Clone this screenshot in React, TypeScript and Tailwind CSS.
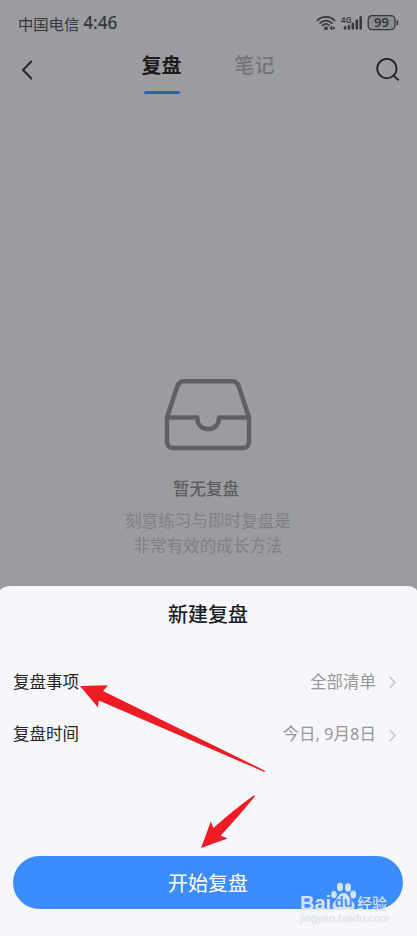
const CJK = "font-['Noto_Sans_CJK_SC',sans-serif]";

const ROWS: { label: string; value: string }[] = [
  { label: "复盘事项", value: "全部清单" },
  { label: "复盘时间", value: "今日, 9月8日" },
];

export default function App() {
  return (
    <div
      className={`relative flex h-[936px] w-[417px] flex-col overflow-hidden bg-[#9b9c9f] ${CJK}`}
    >
      <StatusBar />
      <Header />
      <EmptyState />
      <ReviewSheet />
      <Arrows />
      <Watermark />
    </div>
  );
}

function StatusBar() {
  return (
    <div className="flex h-[46px] shrink-0 items-center justify-between px-[18px] text-[#36373a]">
      <div className="flex items-center gap-1">
        <span className="text-[15.3px] leading-6">中国电信</span>
        <span className="font-['Noto_Sans',sans-serif] text-[17.2px] font-medium leading-6">
          4:46
        </span>
      </div>
      <svg width="84" height="18" viewBox="0 0 84 18" className="text-[#36373a]">
        {/* wifi */}
        <g fill="none" stroke="currentColor" strokeWidth="1.7" strokeLinecap="round">
          <path d="M2.5 6.3C7 1.7 15 1.7 19.5 6.3" />
          <path d="M5.1 9.1C8.5 5.7 13.5 5.7 16.9 9.1" />
          <path d="M7.6 11.5C9.7 9.7 12.3 9.7 14.1 11.3" />
        </g>
        <circle cx="11" cy="14.2" r="1.9" fill="currentColor" />
        <path d="M16.9 11.9v4.4l-2.6-2.2zM17.6 11.9v4.4l2.6-2.2z" fill="currentColor" />
        {/* mobile signal */}
        <text
          x="25.8"
          y="8.6"
          fontSize="9"
          fontWeight="600"
          fill="currentColor"
          className="font-['Noto_Sans',sans-serif]"
          textLength="10.8"
          lengthAdjust="spacingAndGlyphs"
        >
          4G
        </text>
        <g stroke="currentColor" strokeWidth="2.5" strokeLinecap="round">
          <path d="M30 13.3v1.2M33.9 11.9v2.6M37.8 9.8v4.7M41.8 6.7v7.8M45.7 3.2v11.3" />
        </g>
        {/* battery */}
        <rect
          x="53.2"
          y="1.6"
          width="26.8"
          height="14"
          rx="3.8"
          fill="#8b8c90"
          stroke="currentColor"
          strokeWidth="1.3"
        />
        <path d="M82.4 7v3.4" stroke="currentColor" strokeWidth="1.6" strokeLinecap="round" />
        <text
          x="66.5"
          y="13.1"
          fontSize="13"
          fontWeight="600"
          textAnchor="middle"
          fill="currentColor"
          className="font-['Noto_Sans',sans-serif]"
        >
          99
        </text>
      </svg>
    </div>
  );
}

function Header() {
  return (
    <div className="flex h-[54px] shrink-0 items-start justify-between pl-[21px] pr-[17px]">
      <button className="mt-[14px]" aria-label="返回">
        <svg width="12" height="20" viewBox="0 0 12 20" fill="none" stroke="#212225" strokeWidth="1.8" strokeLinecap="round">
          <path d="M10.3 1.5 2 10l8.3 8.5" />
        </svg>
      </button>
      <div className="flex gap-[53px] pl-[8px] text-[20px] leading-[38px]">
        <div className="flex flex-col items-center">
          <span className="font-bold text-[#1b1c1f]">复盘</span>
          <span className="mt-[7px] h-[2.5px] w-[36px] rounded-full bg-[#2b61b0]" />
        </div>
        <span className="font-medium text-[#737477]">笔记</span>
      </div>
      <button className="mt-[11px]" aria-label="搜索">
        <svg width="25" height="25" viewBox="0 0 25 25" fill="none" stroke="#1f2023" strokeWidth="1.8" strokeLinecap="round">
          <circle cx="11.9" cy="11.6" r="9.7" />
          <path d="m18.4 18.4 4.8 4.4" />
        </svg>
      </button>
    </div>
  );
}

function EmptyState() {
  return (
    <div className="flex grow flex-col items-center pt-[278px]">
      <svg width="88" height="73" viewBox="0 0 88 73" fill="none" stroke="#5f6063" strokeWidth="4.5" strokeLinejoin="round" className="mr-[2px]">
        <path d="M3 39.5 13.2 8.5Q15.2 3.2 20 3.2H68.5Q73 3.2 74.8 8.5L85 39.5V63.5Q85 70 78.5 70H9.5Q3 70 3 63.5Z" />
        <path d="M3 39.5H33.3C33.3 47 38 51 44.2 51S55 47 55 39.5H85" />
      </svg>
      <h2 className="mr-[5px] mt-[25px] text-[16.5px] font-medium leading-6 text-[#5c5d60]">
        暂无复盘
      </h2>
      <p className="mr-[1px] mt-[8px] text-center text-[16.6px] leading-[25px] text-[#7f8083]">
        刻意练习与即时复盘是
        <br />
        非常有效的成长方法
      </p>
    </div>
  );
}

function ReviewSheet() {
  return (
    <section className="-mx-1 flex h-[350.5px] shrink-0 flex-col rounded-t-[14px] bg-[#f6f7fb] pl-[17px] pr-[18px]">
      <h1 className="pt-[9.5px] text-center text-[20px] font-medium leading-[38px] text-[#1c1d20]">
        新建复盘
      </h1>
      <div className="mt-[22px] flex flex-col">
        {ROWS.map((row) => (
          <div
            key={row.label}
            className="flex h-[52.5px] items-center justify-between pr-[7px] text-[16.5px]"
          >
            <span className="text-[#242528]">{row.label}</span>
            <span className="flex items-center gap-[13px] text-[#96979a]">
              <span className="pt-[2px] font-['Noto_Sans','Noto_Sans_CJK_SC',sans-serif]">
                {row.value}
              </span>
              <svg width="7" height="13" viewBox="0 0 7 13" fill="none" stroke="#b8b9bc" strokeWidth="1.2" className="mt-[3px]">
                <path d="m.8.8 5.2 5.7-5.2 5.7" />
              </svg>
            </span>
          </div>
        ))}
      </div>
      <button className="mb-[27px] mt-auto h-[53px] rounded-full bg-[#3d8cfe] text-[20px] text-white">
        开始复盘
      </button>
    </section>
  );
}

// Red annotation arrows drawn over the sheet
function Arrows() {
  return (
    <svg
      className="pointer-events-none absolute left-0 top-0"
      width="417"
      height="936"
      viewBox="0 0 417 936"
      fill="#ee1c24"
    >
      <path d="M80 686 108 685.3 103 691 265 770.7 264.5 772 98.8 700.5 98 707.5Z" />
      <path d="M201 848 210.8 821.5 213.5 828Q232 811 254 795.2L255 796.2Q239 816 220.8 835.5L227.5 838.5Z" />
    </svg>
  );
}

function Watermark() {
  return (
    <div className="pointer-events-none absolute left-[300px] top-[882px] text-[#d6e2f6]">
      <div className="flex h-7">
        <span className="w-[30px] pt-[8px] font-['Liberation_Sans',sans-serif] text-[20px] font-bold leading-[26px]">
          Bai
        </span>
        <svg width="27" height="29" viewBox="0 0 27 29" fill="currentColor">
          <ellipse cx="4" cy="12.5" rx="2.8" ry="3.6" />
          <ellipse cx="10" cy="5" rx="3" ry="4.2" />
          <ellipse cx="18" cy="5.5" rx="3" ry="4.2" />
          <ellipse cx="23.2" cy="12.5" rx="3" ry="4" />
          <path d="M13.5 11C8.500 11 8 16 5 19 0.500 23 2.500 28 7 27.700H20C25 28 26.500 23 22 19 19 16 18.500 11 13.500 11Z" />
          <text x="13.7" y="25.3" textAnchor="middle" fontSize="14.5" fontWeight="700" fill="#4c92f8" className="font-['Liberation_Sans',sans-serif]">
            du
          </text>
        </svg>
        <span className="pt-[7px] text-[15px] font-medium leading-[28px]">经验</span>
      </div>
      <div className="mt-[-1px] font-['Liberation_Sans',sans-serif] text-[11.1px] leading-[18px] text-[#e3e5ea] [text-shadow:0_0_1px_#e0e2e7]">
        jingyan.baidu.com
      </div>
    </div>
  );
}
